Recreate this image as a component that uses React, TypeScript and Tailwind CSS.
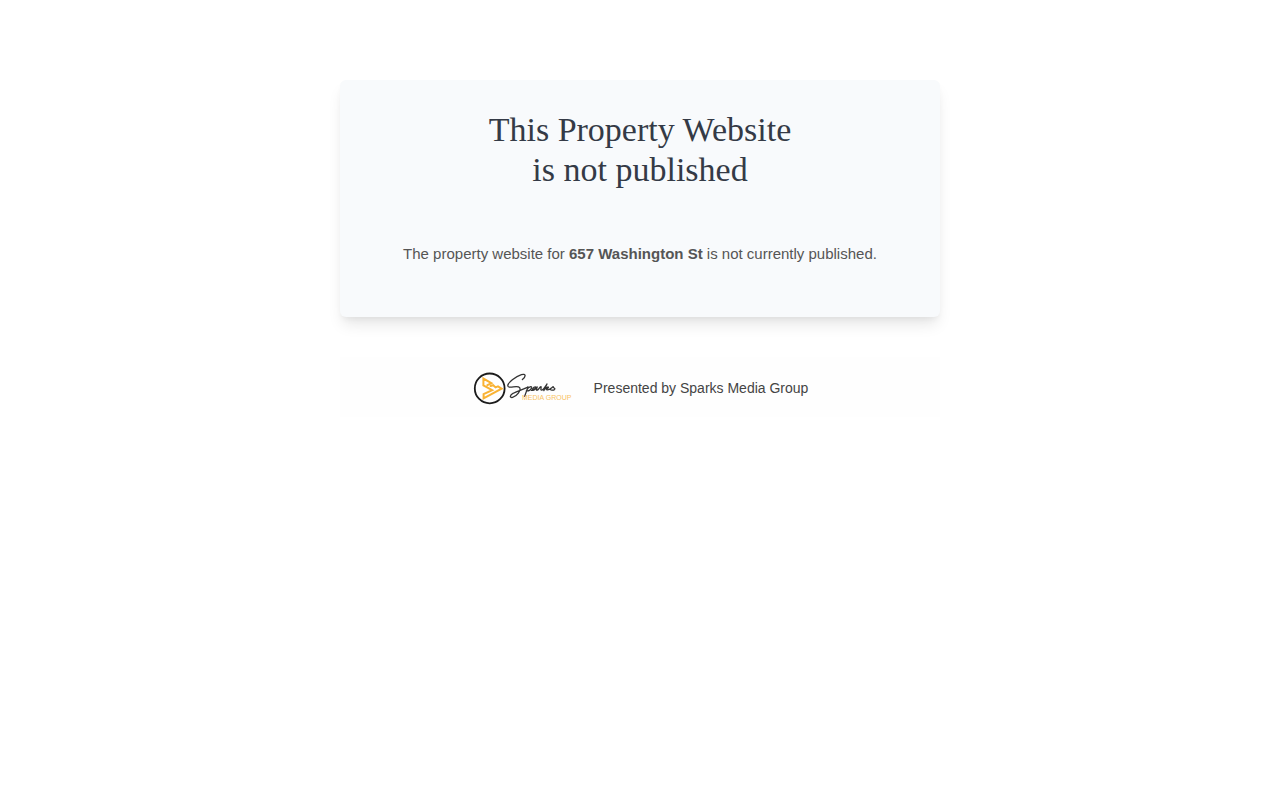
const SparksLogo = () => {
  return (
    <svg
      role="img"
      aria-label="Sparks Media Group"
      viewBox="0 0 102 34"
      className="h-[34px] w-[102px] shrink-0"
      fill="none"
      strokeLinecap="round"
      strokeLinejoin="round"
    >
      {/* Badge */}
      <circle cx="17.7" cy="17.4" r="14.9" stroke="#1c1c1c" strokeWidth="1.8" />
      <path
        d="M15.4 14.2 L19.4 12.2 L11.4 7.6 V14.4 L20.2 19.2 L11.6 23.2 V27.4 L29.6 17.6 L26 15.4 L23.6 16.4 L21.2 14.2 L18.6 15"
        stroke="#f9b233"
        strokeWidth="2"
        strokeLinejoin="miter"
      />

      {/* Signature */}
      <g stroke="#333333" strokeWidth="1.3">
        <path d="M50.4 8.6 C54.4 5.2 53.8 2.4 49.4 3.6 C43.8 5.4 35.4 12 35.8 15 C36.4 18.2 45.4 13.8 47.6 16.6 C49.4 19.4 44.8 25.4 40.6 26.4 C37.4 27 37.6 24.2 41.4 22.2 C45.6 19.8 50.6 18.8 56 16.2" />
        <path d="M56 16 L52.6 25.4 M55 18.6 C56.6 15.6 60.2 14.8 59.6 17 C59 19 56.2 20.4 54.4 19.6" />
        <path d="M59.4 19.4 C62.2 19 65 16 63.4 15.8 C61.2 15.8 59.4 19.4 61.2 19.4 C63 19.2 64.2 17 65.2 16 C64.4 18 64 19.6 65.2 19.2 C67 18.4 67.4 15.8 69 15.6 C69.6 17 68 19.2 69.6 19.2 C71.2 19 73.2 15.6 75 13 L71.8 19.6 M72.6 18.2 C74.8 15.8 77.2 15.4 76.2 16.8 C75.4 17.8 73.6 18 74.8 18.8 C77.2 19.6 79.6 16.6 81.2 15.6 C80.6 17 83.8 17.2 82.6 18.4 C81.4 19.4 78.8 19.4 78.6 18.6" />
      </g>
      <text x="50" y="29" fill="#f9c364" fontSize="7" className="font-['Liberation_Sans',Arial,sans-serif]">
        MEDIA GROUP
      </text>
    </svg>
  );
};

const App = () => {
  const address = "657 Washington St";

  return (
    <main className="mx-auto max-w-[600px] pt-20 text-center font-['Liberation_Sans',Arial,sans-serif]">
      {/* Notice */}
      <section className="rounded-md bg-[#f8fafc] pt-[30px] pb-[50px] shadow-[0_10px_15px_-3px_rgba(0,0,0,0.1),0_4px_6px_-2px_rgba(0,0,0,0.05)]">
        <h1 className="font-['Liberation_Serif','Times_New_Roman',serif] text-[34px] leading-10 text-[#343a46]">
          This Property Website
          <br />
          is not published
        </h1>
        <p className="mt-[50px] px-5 text-[15px] leading-[27px] text-[#555555]">
          The property website for <strong>{address}</strong> is not currently published.
        </p>
      </section>

      {/* Presenter */}
      <footer className="mt-10 flex items-center justify-center gap-5 bg-[#fefefe] pt-[14px] pb-3 text-sm text-[#444444]">
        <SparksLogo />
        <span>Presented by Sparks Media Group</span>
      </footer>
    </main>
  );
};

export default App;
